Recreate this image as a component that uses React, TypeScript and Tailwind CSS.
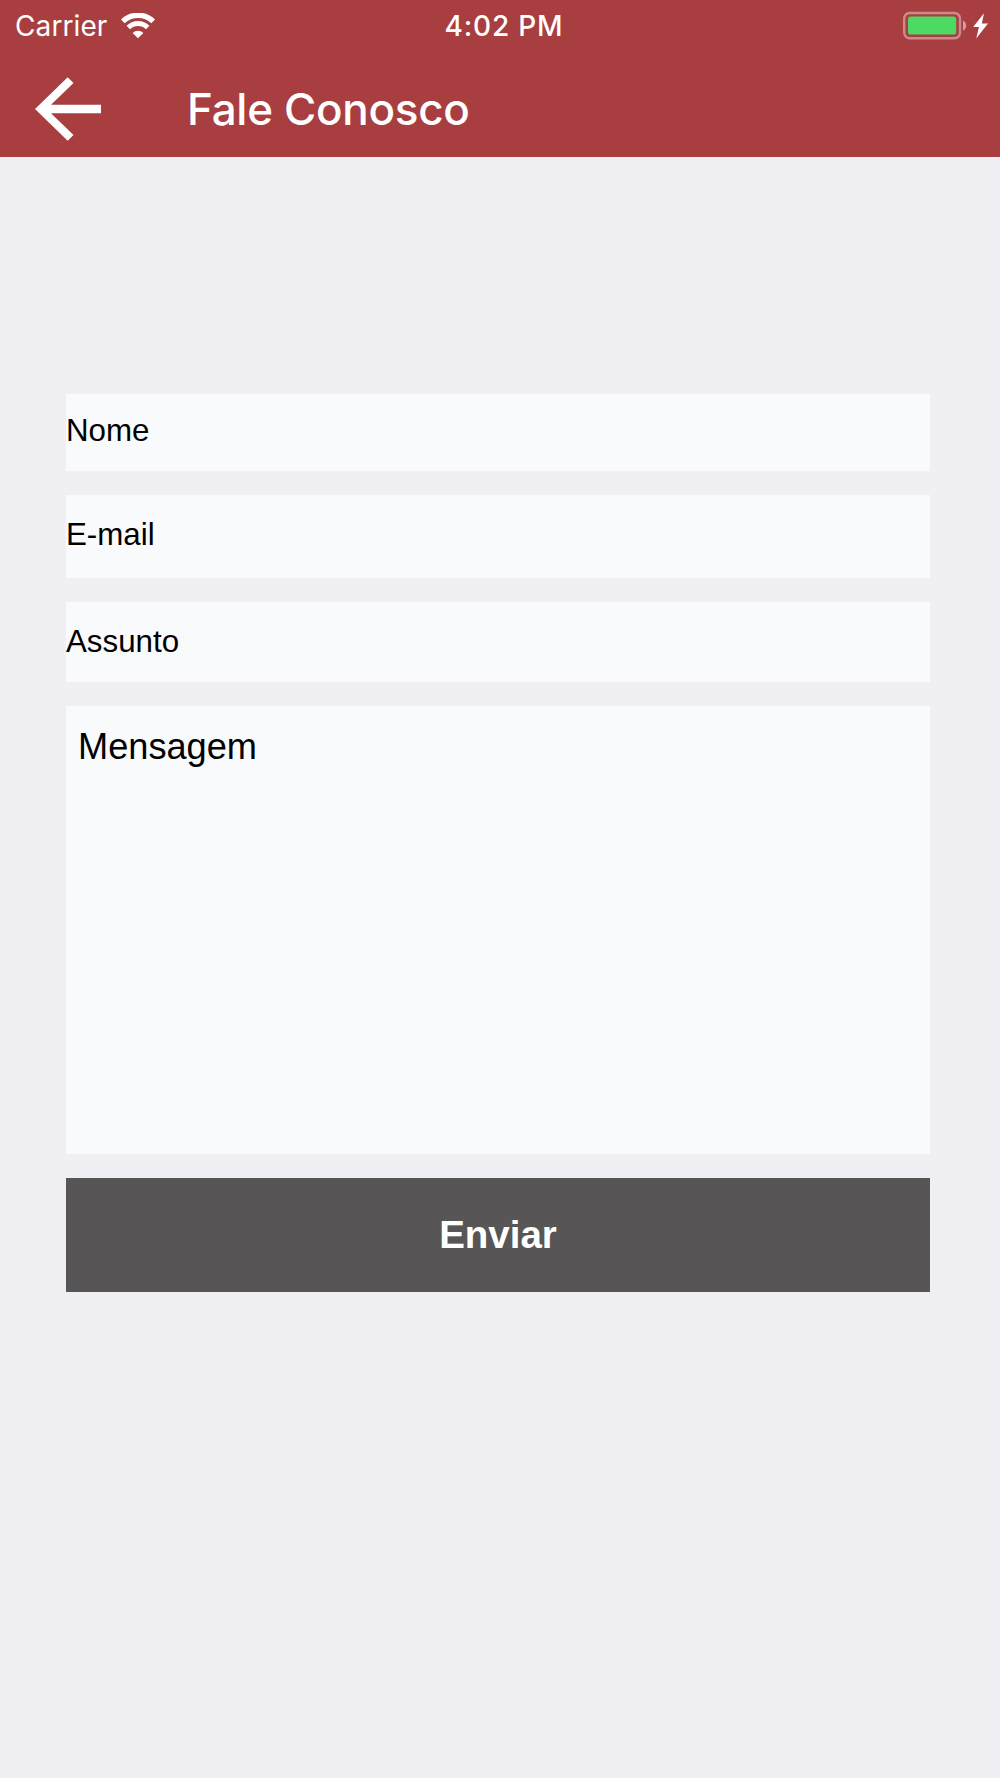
function WifiIcon() {
  return (
    <svg width="34" height="26" viewBox="0 0 34 26" fill="none" className="ml-[14px]">
      <path d="M1.8 8.4a22 22 0 0 1 30.4 0" stroke="#fff" strokeWidth="5.4" />
      <path d="M7.3 14.5a13.8 13.8 0 0 1 19.4 0" stroke="#fff" strokeWidth="5" />
      <path d="M17 25.2l-5.4-5.2a7.7 7.7 0 0 1 10.8 0z" fill="#fff" />
    </svg>
  )
}

function BatteryIcon() {
  return (
    <svg width="88" height="30" viewBox="0 0 88 30" fill="none">
      <rect x="4.2" y="2" width="55.8" height="25.2" rx="5.5" stroke="#fff" strokeOpacity="0.4" strokeWidth="2.4" />
      <rect x="8" y="5.4" width="48.2" height="18.2" rx="2.6" fill="#4cd964" />
      <path d="M63 9.6c4.2 1.8 4.2 8.4 0 10.2z" fill="#fff" fillOpacity="0.5" />
      <path d="M84 2.2L73.2 16h5.8l-2.8 11.6L88 12.4h-6.2z" fill="#fff" />
    </svg>
  )
}

function StatusBar() {
  return (
    <div className="grid h-[50px] grid-cols-3 text-[28px] leading-[50px]">
      <div className="flex items-center pl-[15px]">
        <span className="pt-px tracking-[0.1px]">Carrier</span>
        <WifiIcon />
      </div>
      <span className="pt-px pl-[8px] text-center font-medium tracking-[0.8px]">4:02 PM</span>
      <div className="flex items-center justify-end pr-[12px]">
        <BatteryIcon />
      </div>
    </div>
  )
}

function Header() {
  return (
    <header className="h-[157px] bg-[#a93e40] font-['Inter',sans-serif] text-white">
      <StatusBar />
      <div className="flex h-[107px] items-center pt-[11px] pl-[35px]">
        <button aria-label="Voltar">
          <svg width="66" height="64" viewBox="0 0 66 64">
            <path d="M0 32L32.7 0.3l5.8 5.8L16 27.7h50v8.6H16l22.5 21.6-5.8 5.8z" fill="#fff" />
          </svg>
        </button>
        <h1 className="ml-[86px] text-[44px] leading-[60px] font-medium tracking-[-0.3px]">Fale Conosco</h1>
      </div>
    </header>
  )
}

export default function App() {
  return (
    <div className="min-h-[1778px] w-[1000px] bg-[#efeff4]">
      <Header />
      <form className="mt-[237px] ml-[66px] flex w-[864px] flex-col gap-6 font-['Liberation_Sans',sans-serif] text-[31.3px] text-black">
        <div className="flex h-[77px] items-center bg-[#f9fafc] pb-[2px]">Nome</div>
        <div className="flex h-[83px] items-center bg-[#f9fafc] pb-[2px]">E-mail</div>
        <div className="flex h-20 items-center bg-[#f9fafc]">Assunto</div>
        <div className="h-[448px] bg-[#f9fafc] px-3 pt-[20px] text-[36.2px] leading-[42px]">Mensagem</div>
        <button type="button" className="h-[114px] bg-[#575556] text-[38.5px] font-bold text-white">
          Enviar
        </button>
      </form>
    </div>
  )
}
